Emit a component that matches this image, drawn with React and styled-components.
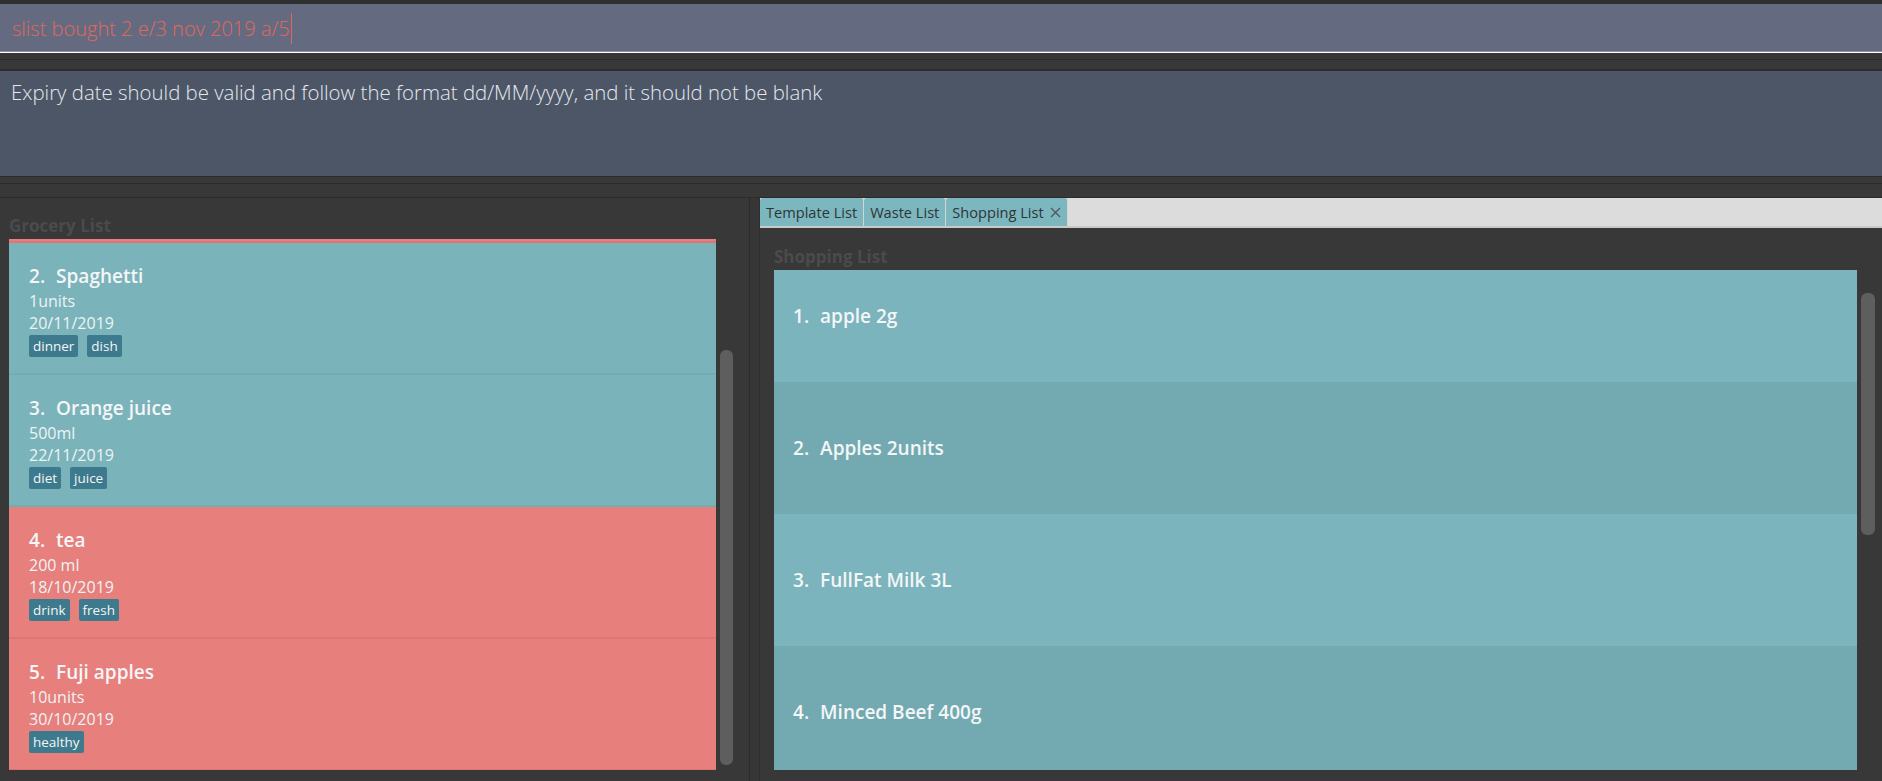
import React, { useLayoutEffect, useRef } from "react";
import styled, { createGlobalStyle } from "styled-components";

const GlobalStyle = createGlobalStyle`
  html, body {
    margin: 0;
    padding: 0;
    background: #383838;
    overflow: hidden;
  }
  #root {
    height: 100vh;
  }
  * {
    box-sizing: border-box;
  }
`;

const Window = styled.div`
  display: flex;
  flex-direction: column;
  height: 100vh;
  background: #383838;
  font-family: "Open Sans", "Noto Sans", sans-serif;
  border-top: 4px solid #2f2f2f;
`;

const CommandBox = styled.div`
  display: flex;
  align-items: center;
  height: 49px;
  padding: 0 12px;
  background: #646b80;
  border-bottom: 1px solid #ffffff;
  box-shadow: 0 -1px 0 #8d93a6 inset;
  font-size: 20px;
  font-weight: 300;
  color: #e2675b;
`;

const Caret = styled.span`
  display: inline-block;
  width: 1px;
  height: 31px;
  margin-left: 1px;
  background: #e2675b;
`;

const Separator = styled.div`
  height: ${(p) => p.$h}px;
  background: #383838;
  border-bottom: 1px solid #2b2b2b;
  border-top: ${(p) => (p.$top ? "1px solid #2b2b2b" : "none")};
`;

const ResultBox = styled.div`
  height: 106px;
  padding: 7px 11px;
  background: #4d5667;
  border-top: 1px solid #2d2d2d;
  font-size: 20.4px;
  font-weight: 300;
  color: #e4e8ee;
`;

const Split = styled.div`
  flex: 1;
  display: flex;
  min-height: 0;
`;

const LeftPane = styled.div`
  width: 750px;
  display: flex;
  flex-direction: column;
  padding: 16px 16px 11px 9px;
  border-right: 1px solid #2b2b2b;
`;

const Divider = styled.div`
  width: 10px;
  background: #363636;
  border-right: 1px solid #2f2f2f;
`;

const RightPane = styled.div`
  flex: 1;
  display: flex;
  flex-direction: column;
  min-width: 0;
`;

const PaneLabel = styled.div`
  height: 24px;
  line-height: 24px;
  font-size: 17px;
  font-weight: 700;
  color: #4b4b4b;
`;

const ListRow = styled.div`
  flex: 1;
  display: flex;
  gap: 4px;
  min-height: 0;
  margin-top: ${(p) => p.$mt || 0}px;
`;

const Viewport = styled.div`
  flex: 1;
  overflow: hidden;
`;

const Track = styled.div`
  width: ${(p) => p.$w}px;
  position: relative;
`;

const Thumb = styled.div`
  position: absolute;
  left: 0;
  right: 0;
  background: #5e5e5e;
  border-radius: 6px;
`;

const GroceryCard = styled.div`
  height: 132px;
  padding: 20px 20px 0;
  background: ${(p) => (p.$expired ? "#e77f7d" : "#7bb3bb")};
  border-bottom: 2px solid ${(p) => (p.$expired ? "#dd7573" : "#75abb3")};
`;

const CardTitle = styled.div`
  display: flex;
  gap: 11px;
  font-size: 19px;
  line-height: 26px;
  font-weight: 600;
  color: #f4f6f7;
`;

const CardDetail = styled.div`
  font-size: 16px;
  line-height: 22px;
  color: #eef3f4;
  margin-top: ${(p) => p.$mt || 0}px;
`;

const Tags = styled.div`
  display: flex;
  gap: 9px;
  margin-top: 1px;
`;

const Tag = styled.span`
  height: 22px;
  line-height: 22px;
  padding: 0 4px;
  border-radius: 2px;
  background: #3e7a8d;
  color: #f3f6f7;
  font-size: 13.5px;
`;

const TabBar = styled.div`
  display: flex;
  height: 30px;
  background: #dcdcdc;
  border-bottom: 2px solid #c9c9c9;
`;

const Tab = styled.div`
  display: flex;
  align-items: center;
  gap: 6px;
  height: 28px;
  padding: 0 6px;
  background: #7cb7bf;
  border-radius: 3px 3px 0 0;
  border-right: 1px solid #d4d4d4;
  color: #2f3437;
  font-size: 14.6px;
`;

const CloseIcon = styled.svg`
  width: 11px;
  height: 11px;
`;

const TabContent = styled.div`
  flex: 1;
  display: flex;
  flex-direction: column;
  min-height: 0;
  padding: 17px 7px 11px 14px;
`;

const ShopRow = styled.div`
  height: 132px;
  display: flex;
  align-items: center;
  gap: 11px;
  padding: 0 19px;
  background: ${(p) => (p.$odd ? "#73aab2" : "#7bb4bc")};
  font-size: 19px;
  font-weight: 600;
  color: #f4f6f7;
`;

const groceries = [
  { name: "Milk", amount: "1L", date: "10/10/2019", tags: ["dairy"], expired: true },
  { name: "Spaghetti", amount: "1units", date: "20/11/2019", tags: ["dinner", "dish"] },
  { name: "Orange juice", amount: "500ml", date: "22/11/2019", tags: ["diet", "juice"] },
  { name: "tea", amount: "200 ml", date: "18/10/2019", tags: ["drink", "fresh"], expired: true },
  { name: "Fuji apples", amount: "10units", date: "30/10/2019", tags: ["healthy"], expired: true },
];

const shopping = [
  "apple 2g",
  "Apples 2units",
  "FullFat Milk 3L",
  "Minced Beef 400g",
  "Bread 1units",
  "Eggs 12units",
  "Butter 250g",
  "Rice 1kg",
];

// viewport that starts scrolled, like the captured state
function ScrolledList({ scroll, children }) {
  const ref = useRef(null);
  useLayoutEffect(() => {
    if (ref.current) ref.current.scrollTop = scroll;
  }, [scroll]);
  return <Viewport ref={ref}>{children}</Viewport>;
}

export default function App() {
  return (
    <Window>
      <GlobalStyle />
      <CommandBox>
        slist bought 2 e/3 nov 2019 a/5
        <Caret />
      </CommandBox>
      <Separator $h={7} />
      <Separator $h={10} />
      <ResultBox>
        Expiry date should be valid and follow the format dd/MM/yyyy, and it should not be blank
      </ResultBox>
      <Separator $h={8} $top />
      <Separator $h={14} />
      <Split>
        <LeftPane>
          <PaneLabel>Grocery List</PaneLabel>
          <ListRow $mt={1}>
            <ScrolledList scroll={128}>
              {groceries.map((g, i) => (
                <GroceryCard key={g.name} $expired={g.expired}>
                  <CardTitle>
                    <span>{i + 1}.</span>
                    <span>{g.name}</span>
                  </CardTitle>
                  <CardDetail $mt={1}>{g.amount}</CardDetail>
                  <CardDetail>{g.date}</CardDetail>
                  <Tags>
                    {g.tags.map((t) => (
                      <Tag key={t}>{t}</Tag>
                    ))}
                  </Tags>
                </GroceryCard>
              ))}
            </ScrolledList>
            <Track $w={13}>
              <Thumb style={{ top: 111, bottom: 5 }} />
            </Track>
          </ListRow>
        </LeftPane>
        <Divider />
        <RightPane>
          <TabBar>
            <Tab>Template List</Tab>
            <Tab>Waste List</Tab>
            <Tab>
              Shopping List
              <CloseIcon viewBox="0 0 11 11">
                <path d="M1 1 L10 10 M10 1 L1 10" stroke="#4d5a5f" strokeWidth="1.4" />
              </CloseIcon>
            </Tab>
          </TabBar>
          <TabContent>
            <PaneLabel>Shopping List</PaneLabel>
            <ListRow $mt={1}>
              <ScrolledList scroll={20}>
                {shopping.map((s, i) => (
                  <ShopRow key={s} $odd={i % 2 === 1}>
                    <span>{i + 1}.</span>
                    <span>{s}</span>
                  </ShopRow>
                ))}
              </ScrolledList>
              <Track $w={14}>
                <Thumb style={{ top: 23, height: 242 }} />
              </Track>
            </ListRow>
          </TabContent>
        </RightPane>
      </Split>
    </Window>
  );
}
